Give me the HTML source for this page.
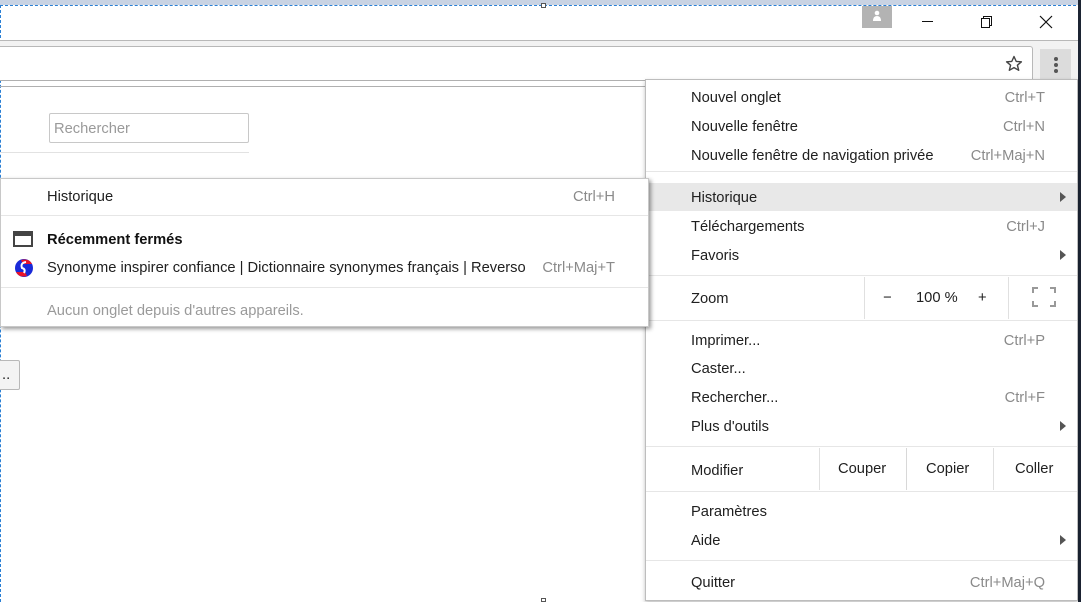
<!DOCTYPE html>
<html><head><meta charset="utf-8"><style>
*{margin:0;padding:0;box-sizing:border-box}
body{width:1081px;height:602px;position:relative;overflow:hidden;background:#fff;font-family:"Liberation Sans",sans-serif;font-size:14.7px;color:#202020}
.a{position:absolute}
.t{position:absolute;white-space:nowrap;line-height:16px}
.sc{position:absolute;white-space:nowrap;line-height:16px;color:#8a8a8a;text-align:right}
.sep{position:absolute;height:1px;background:#e6e6e6}
.arr{position:absolute;width:0;height:0;border-top:5px solid transparent;border-bottom:5px solid transparent;border-left:6px solid #555}
</style></head><body>
<div class="a" style="left:0;top:0;width:1081px;height:5px;background:#c9d3e3"></div>
<div class="a" style="left:0;top:5px;width:1081px;border-top:1px dashed #2a7fd4"></div>
<div class="a" style="left:0;top:5px;height:597px;border-left:1px dashed #2a7fd4"></div>
<div class="a" style="left:1078px;top:0;width:3px;height:602px;background:#1c2433"></div>
<div class="a" style="left:541px;top:3px;width:5px;height:5px;border:1px solid #555;background:#fff"></div>
<div class="a" style="left:862px;top:6px;width:30px;height:22px;background:#b3b3b3"></div>
<div class="a" style="left:872px;top:9px;width:10px;height:11px"><svg width="10" height="11"><circle cx="5" cy="3" r="2.3" fill="#fff"/><path d="M1 11 Q1 6 5 6 Q9 6 9 11Z" fill="#fff"/></svg></div>
<div class="a" style="left:922px;top:21px;width:11px;height:1px;background:#111"></div>
<svg class="a" style="left:980px;top:15px" width="13" height="13"><rect x="1.5" y="3.5" width="8" height="9" fill="none" stroke="#111"/><path d="M3.5 3.5V1.5H11.5V10.5H9.5" fill="none" stroke="#111"/></svg>
<svg class="a" style="left:1039px;top:15px" width="14" height="14"><path d="M1 1L13 13M13 1L1 13" stroke="#111" stroke-width="1.2"/></svg>
<div class="a" style="left:0;top:40px;width:1078px;height:40px;background:#f2f2f2;border-top:1px solid #b8b8b8;border-bottom:1px solid #b0b0b0"></div>
<div class="a" style="left:0;top:46px;width:1033px;height:35px;background:#fff;border:1px solid #b8b8b8;border-left:none;border-bottom:none;border-radius:0 3px 0 0"></div>
<div class="a" style="left:0;top:80px;width:1078px;height:1px;background:#b0b0b0"></div>
<div class="a" style="left:0;top:86px;width:645px;height:1px;background:#b0b0b0"></div>
<svg class="a" style="left:1004px;top:54px" width="20" height="20"><path d="M10 2.5L12.2 7.4L17.4 7.8L13.4 11.2L14.7 16.3L10 13.6L5.3 16.3L6.6 11.2L2.6 7.8L7.8 7.4Z" fill="none" stroke="#444" stroke-width="1.4" stroke-linejoin="round"/></svg>
<div class="a" style="left:1040px;top:49px;width:31px;height:31px;background:#dcdcdc"></div>
<div class="a" style="left:1054px;top:57px;width:4px;height:4px;border-radius:2px;background:#555"></div>
<div class="a" style="left:1054px;top:63px;width:4px;height:4px;border-radius:2px;background:#555"></div>
<div class="a" style="left:1054px;top:69px;width:4px;height:4px;border-radius:2px;background:#555"></div>
<div class="a" style="left:49px;top:113px;width:200px;height:30px;border:1px solid #c8c8c8;border-radius:2px"></div>
<div class="t" style="left:54px;top:121px;color:#9a9a9a">Rechercher</div>
<div class="a" style="left:0;top:152px;width:249px;height:1px;background:#e2e2e2"></div>
<div class="a" style="left:-3px;top:360px;width:23px;height:30px;border:1px solid #b8b8b8;border-radius:2px;background:#f3f3f3"></div>
<div class="t" style="left:2px;top:367px">..</div>
<!-- right menu -->
<div class="a" style="left:645px;top:79px;width:433px;height:522px;background:#fff;border:1px solid #bdbdbd;box-shadow:0 2px 4px rgba(0,0,0,.25)"></div>
<div class="t" style="left:691px;top:90px">Nouvel onglet</div><div class="sc" style="left:900px;top:90px;width:145px">Ctrl+T</div>
<div class="t" style="left:691px;top:119px">Nouvelle fenêtre</div><div class="sc" style="left:900px;top:119px;width:145px">Ctrl+N</div>
<div class="t" style="left:691px;top:148px">Nouvelle fenêtre de navigation privée</div><div class="sc" style="left:900px;top:148px;width:145px">Ctrl+Maj+N</div>
<div class="sep" style="left:646px;top:171px;width:431px"></div>
<div class="a" style="left:646px;top:183px;width:431px;height:28px;background:#e8e8e8"></div>
<div class="t" style="left:691px;top:190px">Historique</div><div class="arr" style="left:1060px;top:192px"></div>
<div class="t" style="left:691px;top:219px">Téléchargements</div><div class="sc" style="left:900px;top:219px;width:145px">Ctrl+J</div>
<div class="t" style="left:691px;top:248px">Favoris</div><div class="arr" style="left:1060px;top:250px"></div>
<div class="sep" style="left:646px;top:275px;width:431px"></div>
<div class="t" style="left:691px;top:291px">Zoom</div>
<div class="a" style="left:864px;top:277px;width:1px;height:42px;background:#e0e0e0"></div>
<div class="t" style="left:883px;top:290px">−</div>
<div class="t" style="left:916px;top:290px">100 %</div>
<div class="t" style="left:978px;top:290px">+</div>
<div class="a" style="left:1008px;top:277px;width:1px;height:42px;background:#e0e0e0"></div>
<svg class="a" style="left:1032px;top:287px" width="24" height="20"><path d="M1 6V1H6M18 1H23V6M23 14V19H18M6 19H1V14" fill="none" stroke="#999" stroke-width="2"/></svg>
<div class="sep" style="left:646px;top:320px;width:431px"></div>
<div class="t" style="left:691px;top:333px">Imprimer...</div><div class="sc" style="left:900px;top:333px;width:145px">Ctrl+P</div>
<div class="t" style="left:691px;top:361px">Caster...</div>
<div class="t" style="left:691px;top:390px">Rechercher...</div><div class="sc" style="left:900px;top:390px;width:145px">Ctrl+F</div>
<div class="t" style="left:691px;top:419px">Plus d'outils</div><div class="arr" style="left:1060px;top:421px"></div>
<div class="sep" style="left:646px;top:446px;width:431px"></div>
<div class="t" style="left:691px;top:463px">Modifier</div>
<div class="a" style="left:819px;top:448px;width:1px;height:42px;background:#e0e0e0"></div>
<div class="t" style="left:838px;top:461px">Couper</div>
<div class="a" style="left:906px;top:448px;width:1px;height:42px;background:#d8d8d8"></div>
<div class="t" style="left:926px;top:461px">Copier</div>
<div class="a" style="left:993px;top:448px;width:1px;height:42px;background:#e0e0e0"></div>
<div class="t" style="left:1015px;top:461px">Coller</div>
<div class="sep" style="left:646px;top:491px;width:431px"></div>
<div class="t" style="left:691px;top:504px">Paramètres</div>
<div class="t" style="left:691px;top:533px">Aide</div><div class="arr" style="left:1060px;top:535px"></div>
<div class="sep" style="left:646px;top:560px;width:431px"></div>
<div class="t" style="left:691px;top:575px">Quitter</div><div class="sc" style="left:900px;top:575px;width:145px">Ctrl+Maj+Q</div>
<!-- left submenu (on top) -->
<div class="a" style="left:0;top:178px;width:649px;height:149px;background:#fff;border:1px solid #c8c8c8;box-shadow:2px 2px 4px rgba(0,0,0,.4)"></div>
<div class="t" style="left:47px;top:189px">Historique</div>
<div class="sc" style="left:500px;top:189px;width:115px">Ctrl+H</div>
<div class="sep" style="left:1px;top:215px;width:647px"></div>
<svg class="a" style="left:13px;top:231px" width="20" height="16"><rect x="1" y="1" width="18" height="14" fill="none" stroke="#444" stroke-width="2"/><rect x="1" y="1" width="18" height="4" fill="#444"/></svg>
<div class="t" style="left:47px;top:232px;font-weight:bold;color:#111">Récemment fermés</div>
<svg class="a" style="left:13px;top:258px" width="22" height="20"><circle cx="11" cy="10" r="9" fill="#1a2ad8"/><path d="M3 14 Q6 20 14 18 L12 14Z M19 6 Q16 0 8 2 L10 6Z" fill="#e8132a"/><path d="M13 4 Q7 5 9 10 Q13 11 11 15" fill="none" stroke="#fff" stroke-width="2"/></svg>
<div class="t" style="left:47px;top:260px">Synonyme inspirer confiance | Dictionnaire synonymes français | Reverso</div>
<div class="sc" style="left:500px;top:260px;width:115px">Ctrl+Maj+T</div>
<div class="sep" style="left:1px;top:287px;width:647px"></div>
<div class="t" style="left:47px;top:303px;color:#9a9a9a">Aucun onglet depuis d'autres appareils.</div>
<div class="a" style="left:541px;top:598px;width:5px;height:4px;border:1px solid #555;background:#fff"></div>
</body></html>
